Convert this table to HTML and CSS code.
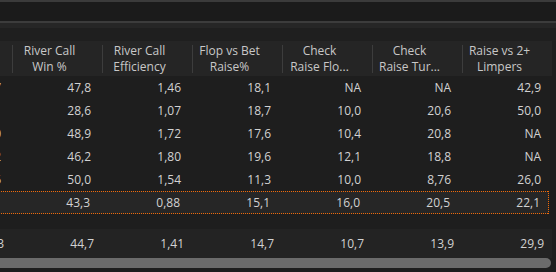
FILE: index.html
```html
<!DOCTYPE html>
<html>
<head>
<meta charset="utf-8">
<link rel="stylesheet" href="styles.css">
</head>
<body>
<div class="topline"></div>
<div class="toolbar"></div>
<div class="divider"></div>
<div class="band"></div>
<div class="spacer"></div>
<div class="grid">
  <div class="head row">
    <div class="hcell"><span>Hands</span></div>
    <div class="hcell"><span>River Call<br>Win %</span></div>
    <div class="hcell"><span>River Call<br>Efficiency</span></div>
    <div class="hcell"><span>Flop vs Bet<br>Raise%</span></div>
    <div class="hcell"><span>Check<br>Raise Flo...</span></div>
    <div class="hcell"><span>Check<br>Raise Tur...</span></div>
    <div class="hcell last"><span>Raise vs 2+<br>Limpers</span></div>
  </div>
  <div class="row data">
    <div class="cell">21,7</div><div class="cell">47,8</div><div class="cell">1,46</div><div class="cell">18,1</div><div class="cell">NA</div><div class="cell">NA</div><div class="cell last">42,9</div>
  </div>
  <div class="row data">
    <div class="cell">30,1</div><div class="cell">28,6</div><div class="cell">1,07</div><div class="cell">18,7</div><div class="cell">10,0</div><div class="cell">20,6</div><div class="cell last">50,0</div>
  </div>
  <div class="row data">
    <div class="cell">18,0</div><div class="cell">48,9</div><div class="cell">1,72</div><div class="cell">17,6</div><div class="cell">10,4</div><div class="cell">20,8</div><div class="cell last">NA</div>
  </div>
  <div class="row data">
    <div class="cell">15,2</div><div class="cell">46,2</div><div class="cell">1,80</div><div class="cell">19,6</div><div class="cell">12,1</div><div class="cell">18,8</div><div class="cell last">NA</div>
  </div>
  <div class="row data">
    <div class="cell">11,6</div><div class="cell">50,0</div><div class="cell">1,54</div><div class="cell">11,3</div><div class="cell">10,0</div><div class="cell">8,76</div><div class="cell last">26,0</div>
  </div>
  <div class="row data selected">
    <div class="cell"></div><div class="cell">43,3</div><div class="cell">0,88</div><div class="cell">15,1</div><div class="cell">16,0</div><div class="cell">20,5</div><div class="cell last">22,1</div>
  </div>
  <div class="gap"></div>
  <div class="row foot">
    <div class="cell">20,3</div><div class="cell">44,7</div><div class="cell">1,41</div><div class="cell">14,7</div><div class="cell">10,7</div><div class="cell">13,9</div><div class="cell last">29,9</div>
  </div>
  <div class="scroll"><div class="thumb"></div></div>
</div>
</body>
</html>
```

FILE: styles.css
```css
html, body {
  margin: 0;
  padding: 0;
  background: #1e1e1e;
  overflow: hidden;
  width: 556px;
  height: 272px;
  font-family: "Open Sans", "Noto Sans", sans-serif;
  font-size: 12px;
}
.topline { height: 2px; background: #3b3b3b; }
.toolbar { height: 19px; background: #1b1b1b; }
.divider { height: 2px; background: #3c3c3c; }
.band { height: 5px; background: #262626; }
.spacer { height: 13px; background: #1f1f1f; }
.grid {
  margin-left: -77px;
  width: 629px;
}
.row { display: flex; }
.head {
  height: 35px;
  background: #252525;
}
.hcell {
  width: 90px;
  flex: none;
  box-sizing: border-box;
  border-right: 1px solid #3d3d3d;
  margin: 4px 0 3px;
  display: flex;
  align-items: center;
  justify-content: center;
  padding-right: 16px;
  color: #c8c8c8;
  text-align: center;
  line-height: 16px;
  white-space: nowrap;
}
.hcell span { margin-top: -1px; }
.hcell.last { border-right: none; width: 89px; }
.data { height: 23px; }
.cell {
  width: 90px;
  flex: none;
  box-sizing: border-box;
  padding-right: 12px;
  text-align: right;
  color: #d2d2d2;
  line-height: 23px;
  white-space: nowrap;
}
.cell.last { width: 89px; padding-right: 11px; }
.selected {
  background-color: #262626;
  box-sizing: border-box;
  width: 626px;
  padding: 1px 1px 1px 0;
  background-image:
    linear-gradient(90deg, #f06a0a 50%, transparent 50%),
    linear-gradient(90deg, #f06a0a 50%, transparent 50%),
    linear-gradient(180deg, #f06a0a 50%, transparent 50%);
  background-size: 2px 1px, 2px 1px, 1px 2px;
  background-position: 0 0, 0 100%, 100% 0;
  background-repeat: repeat-x, repeat-x, repeat-y;
}
.selected .cell { line-height: 21px; }
.selected .cell:first-child { width: 89px; }
.gap { height: 15px; }
.foot {
  height: 29px;
  background: #232323;
}
.foot .cell { line-height: 29px; padding-right: 9px; }
.foot .cell.last { padding-right: 8px; }
.scroll {
  height: 10px;
}
.thumb {
  height: 10px;
  width: 628px;
  background: #6b6b6b;
  border-radius: 0 5px 5px 0;
}
```
